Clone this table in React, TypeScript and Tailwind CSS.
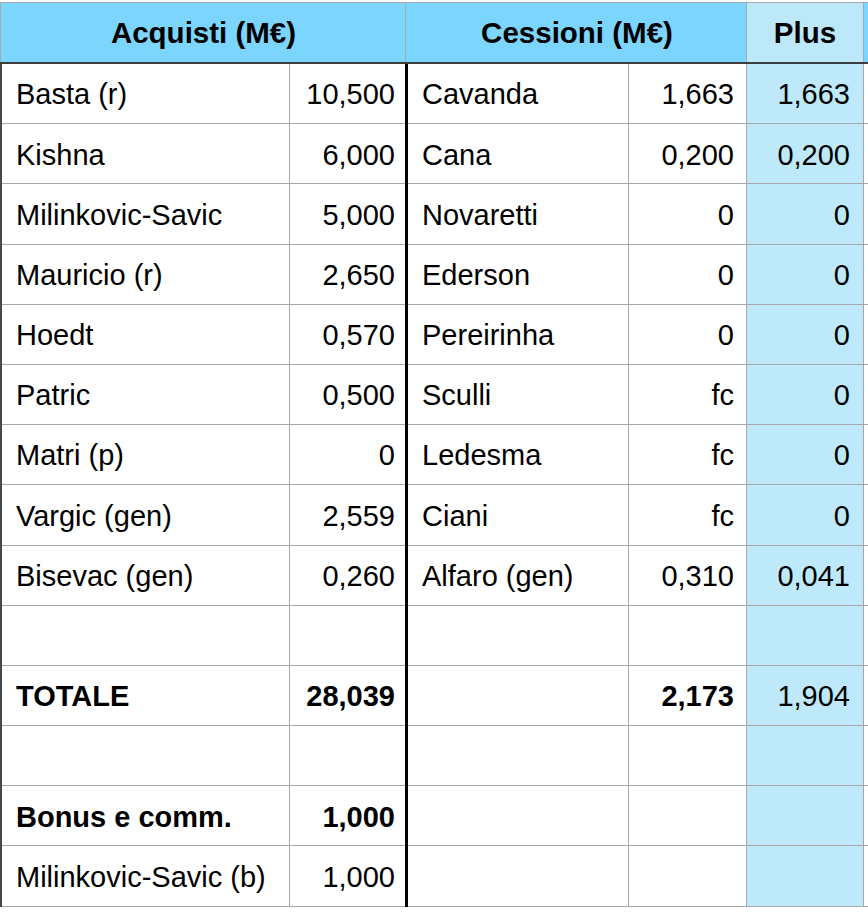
import React from "react";

type Row = {
  a: string;
  av: string;
  c: string;
  cv: string;
  p: string;
  bold?: boolean;
  boldC?: boolean;
};

const rows: Row[] = [
  { a: "Basta (r)", av: "10,500", c: "Cavanda", cv: "1,663", p: "1,663" },
  { a: "Kishna", av: "6,000", c: "Cana", cv: "0,200", p: "0,200" },
  { a: "Milinkovic-Savic", av: "5,000", c: "Novaretti", cv: "0", p: "0" },
  { a: "Mauricio (r)", av: "2,650", c: "Ederson", cv: "0", p: "0" },
  { a: "Hoedt", av: "0,570", c: "Pereirinha", cv: "0", p: "0" },
  { a: "Patric", av: "0,500", c: "Sculli", cv: "fc", p: "0" },
  { a: "Matri (p)", av: "0", c: "Ledesma", cv: "fc", p: "0" },
  { a: "Vargic (gen)", av: "2,559", c: "Ciani", cv: "fc", p: "0" },
  { a: "Bisevac (gen)", av: "0,260", c: "Alfaro (gen)", cv: "0,310", p: "0,041" },
  { a: "", av: "", c: "", cv: "", p: "" },
  { a: "TOTALE", av: "28,039", c: "", cv: "2,173", p: "1,904", bold: true, boldC: true },
  { a: "", av: "", c: "", cv: "", p: "" },
  { a: "Bonus e comm.", av: "1,000", c: "", cv: "", p: "", bold: true },
  { a: "Milinkovic-Savic (b)", av: "1,000", c: "", cv: "", p: "" },
];

export default function App() {
  return (
    <div
      className="w-[868px] h-[912px] bg-white overflow-hidden pt-[2px] text-black"
      style={{ fontFamily: '"Liberation Sans", Arial, Helvetica, sans-serif' }}
    >
      {/* Header */}
      <div className="flex h-[60px] border-t border-[#a8a8a8] bg-[#7bd5fc] text-[29.5px] font-bold">
        <div className="w-[2px] shrink-0 border-l border-[#a8a8a8]" />
        <div className="w-[404px] shrink-0 flex items-center justify-center pt-[2px] border-r border-[#a8a8a8]">
          Acquisti (M€)
        </div>
        <div className="w-[340px] shrink-0 flex items-center justify-center pt-[2px] pl-[2px]">
          Cessioni (M€)
        </div>
        <div className="w-[118px] shrink-0 flex items-center justify-center pt-[2px] border-x border-[#a8a8a8] bg-[#bce8fa]">
          Plus
        </div>
        <div className="flex-1" />
      </div>
      <div className="h-[2px] bg-[#3d3d3d]" />
      {/* Body */}
      <div className="flex">
        <div className="w-[2px] shrink-0 bg-[#3f4a52] h-[843px]" />
        <div className="flex-1">
          {rows.map((r, i) => (
            <div key={i} className="flex h-[60.2px] text-[29px]">
              <div
                className={`w-[288px] shrink-0 flex items-center pt-[3px] pl-[14px] border-r border-b border-[#a8a8a8] whitespace-nowrap ${r.bold ? "font-bold" : ""}`}
              >
                {r.a}
              </div>
              <div
                className={`w-[115px] shrink-0 flex items-center justify-end pt-[3px] pr-[10px] border-b border-[#a8a8a8] ${r.bold ? "font-bold" : ""}`}
              >
                {r.av}
              </div>
              <div className="w-[3px] shrink-0 bg-black" />
              <div className="w-[221px] shrink-0 flex items-center pt-[3px] pl-[14px] border-r border-b border-[#a8a8a8] whitespace-nowrap">
                {r.c}
              </div>
              <div
                className={`w-[117px] shrink-0 flex items-center justify-end pt-[3px] pr-[12px] border-b border-[#a8a8a8] ${r.boldC ? "font-bold" : ""}`}
              >
                {r.cv}
              </div>
              <div className="w-[118px] shrink-0 flex items-center justify-end pt-[3px] pr-[13px] border-x border-b border-[#a8a8a8] bg-[#bee9fa]">
                {r.p}
              </div>
              <div className="flex-1 border-b border-[#a8a8a8]" />
            </div>
          ))}
        </div>
      </div>
    </div>
  );
}
